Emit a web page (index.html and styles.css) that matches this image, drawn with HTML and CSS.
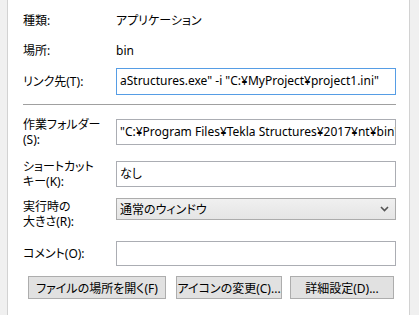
FILE: index.html
```html
<!DOCTYPE html>
<html lang="ja">
<head>
  <meta charset="UTF-8">
  <title>プロパティ - ショートカット</title>
  <link rel="stylesheet" href="styles.css">
</head>
<body>
  <div class="panel">
    <div class="row row-text">
      <span class="label">種類:</span>
      <span class="value">アプリケーション</span>
    </div>
    <div class="row row-text row-place">
      <span class="label">場所:</span>
      <span class="value latin">bin</span>
    </div>
    <div class="row row-link">
      <span class="label">リンク先(T):</span>
      <div class="field focused">aStructures.exe" -i "C:¥MyProject¥project1.ini"</div>
    </div>

    <hr class="sep">

    <div class="row row-work">
      <span class="label">作業フォルダー<br>(S):</span>
      <div class="field">"C:¥Program Files¥Tekla Structures¥2017¥nt¥bin"</div>
    </div>
    <div class="row row-key">
      <span class="label">ショートカット<br>キー(K):</span>
      <div class="field">なし</div>
    </div>
    <div class="row row-size">
      <span class="label">実行時の<br>大きさ(R):</span>
      <div class="select">
        <span>通常のウィンドウ</span>
        <svg class="chevron" width="9" height="6" viewBox="0 0 9 6">
          <path d="M1 1 L4.5 4.5 L8 1" fill="none" stroke="#555" stroke-width="1.6"/>
        </svg>
      </div>
    </div>
    <div class="row row-comment">
      <span class="label">コメント(O):</span>
      <div class="field"></div>
    </div>

    <div class="buttons">
      <button class="btn btn-open">ファイルの場所を開く(F)</button>
      <button class="btn btn-icon">アイコンの変更(C)...</button>
      <button class="btn btn-adv">詳細設定(D)...</button>
    </div>
  </div>
</body>
</html>
```

FILE: styles.css
```css
* {
  margin: 0;
  padding: 0;
  box-sizing: border-box;
}
body {
  background: #f0f0f0;
  color: #000;
  font-family: "Noto Sans", "Noto Sans CJK JP", sans-serif;
  font-size: 12px;
  font-feature-settings: "palt";
  overflow: hidden;
}
.panel {
  margin-left: 7px;
  width: 403px;
  height: 315px;
  background: #fff;
  border-left: 1px solid #d2d2d2;
  border-right: 1px solid #d2d2d2;
  padding: 11px 0 0 15px;
}
.row {
  display: grid;
  grid-template-columns: 93px 280px;
  align-items: center;
}
.label {
  line-height: 15px;
  white-space: nowrap;
}
.row-text {
  height: 18px;
}
.row-place {
  margin-top: 12px;
}
.row-link {
  margin-top: 9px;
}
.row-link .field {
  height: 27px;
}
.field {
  height: 26px;
  border: 1px solid #abadb3;
  background: #fff;
  padding: 0 3px;
  line-height: 24px;
  white-space: nowrap;
  overflow: hidden;
}
.field.focused {
  border-color: #569de5;
}
.sep {
  border: none;
  border-top: 1px solid #a0a0a0;
  width: 373px;
  margin-top: 9px;
}
.row-work {
  margin-top: 12px;
}
.row-key {
  margin-top: 12px;
}
.row-size {
  margin-top: 9px;
  align-items: start;
}
.row-size .label {
  margin-top: 1px;
}
.select {
  height: 22px;
  border: 1px solid #acacac;
  background: linear-gradient(#f0f0f0, #e5e5e5);
  display: flex;
  align-items: center;
  justify-content: space-between;
  padding: 0 6px 0 3px;
}
.chevron {
  display: block;
}
.row-comment {
  margin-top: 12px;
}
.row-comment .field {
  height: 25px;
}
.buttons {
  display: flex;
  margin: 10px 0 0 5px;
}
.btn {
  height: 23px;
  border: 1px solid #adadad;
  background: #e1e1e1;
  font: inherit;
  color: #000;
  white-space: nowrap;
}
.btn-open {
  width: 138px;
}
.btn-icon {
  width: 106px;
  margin-left: 10px;
}
.btn-adv {
  width: 104px;
  margin-left: 8px;
}
```
